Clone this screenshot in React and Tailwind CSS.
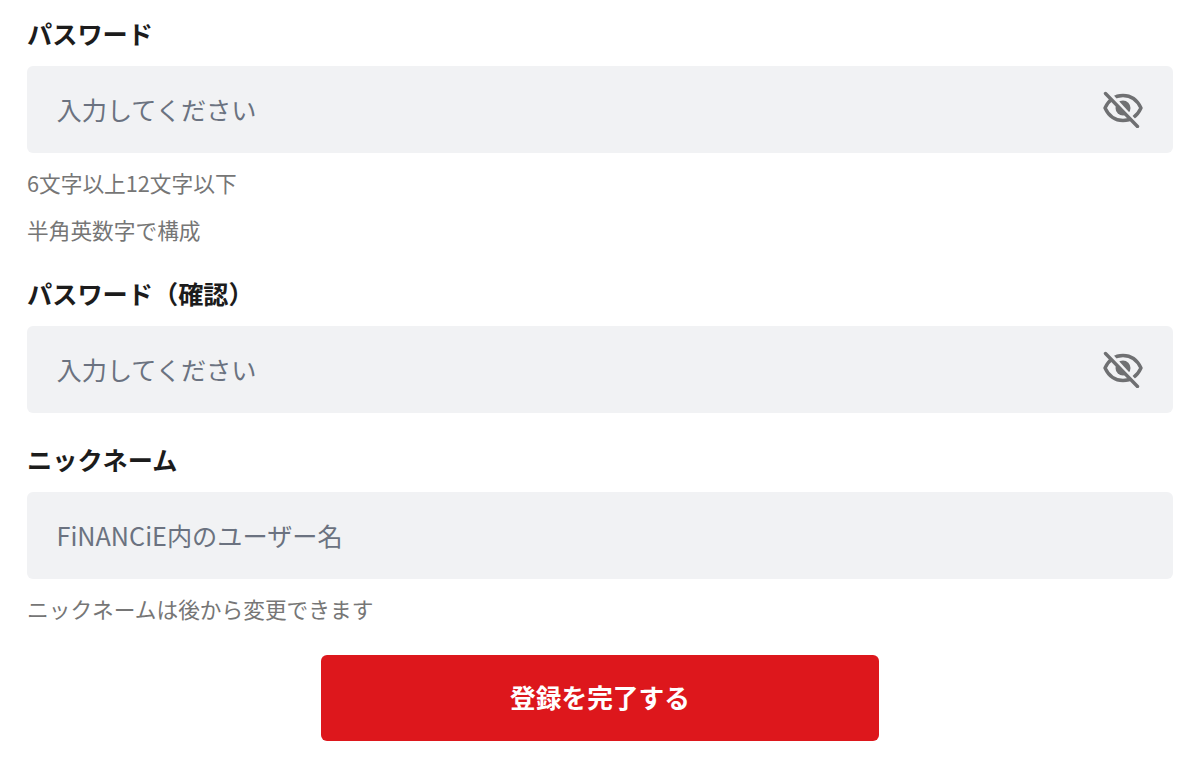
const FONT = "font-['Noto_Sans_CJK_JP','Noto_Sans',sans-serif]"

function EyeOff() {
  return (
    <svg width="40" height="38" viewBox="0 0 40 38" fill="none" className="shrink-0 text-[#6f7072]">
      <path d="M2 18C6 9.500 12.500 5.500 20 5.500C27.500 5.500 34 9.500 38 18C34 26.500 27.500 30.500 20 30.500C12.500 30.500 6 26.500 2 18Z" stroke="currentColor" strokeWidth="3.400" strokeLinejoin="round" />
      <circle cx="20" cy="18" r="7.500" fill="currentColor" />
      <path d="M5 2L38 38" stroke="#f1f2f4" strokeWidth="4" />
      <path d="M2.500 3.500L34.500 36.500" stroke="currentColor" strokeWidth="3.400" strokeLinecap="round" />
    </svg>
  )
}

function Field({ label, placeholder, secret, hints = [] }) {
  return (
    <div>
      <label className="block text-[25.2px] leading-[36.500px] font-bold text-[#1c1c1c]">{label}</label>
      <div className="mt-[14.500px] flex h-[86.500px] items-center justify-between rounded-[6px] bg-[#f1f2f4] pr-[30px] pl-[29.500px]">
        <span className="text-[25.2px] leading-[36px] text-[#6b7280]">{placeholder}</span>
        {secret && <EyeOff />}
      </div>
      {hints.map((h, i) => (
        <p key={h} className={`text-[21.7px] leading-[32px] text-[#767676] ${i === 0 ? 'mt-[14px]' : 'mt-[15px]'}`}>
          {h}
        </p>
      ))}
    </div>
  )
}

export default function App() {
  return (
    <div className={`${FONT} h-[764px] w-[1200px] overflow-hidden bg-white px-[27px] pt-[15px]`}>
      <Field label="パスワード" placeholder="入力してください" secret hints={['6文字以上12文字以下', '半角英数字で構成']} />
      <div className="mt-[29.500px]">
        <Field label="パスワード（確認）" placeholder="入力してください" secret />
      </div>
      <div className="mt-[28.500px]">
        <Field label="ニックネーム" placeholder="FiNANCiE内のユーザー名" hints={['ニックネームは後から変更できます']} />
      </div>
      <div className="mt-[30px] flex justify-center">
        <button type="button" className="h-[86px] w-[558px] rounded-[6px] bg-[#dd171c] text-[25.700px] font-bold text-white">
          登録を完了する
        </button>
      </div>
    </div>
  )
}
